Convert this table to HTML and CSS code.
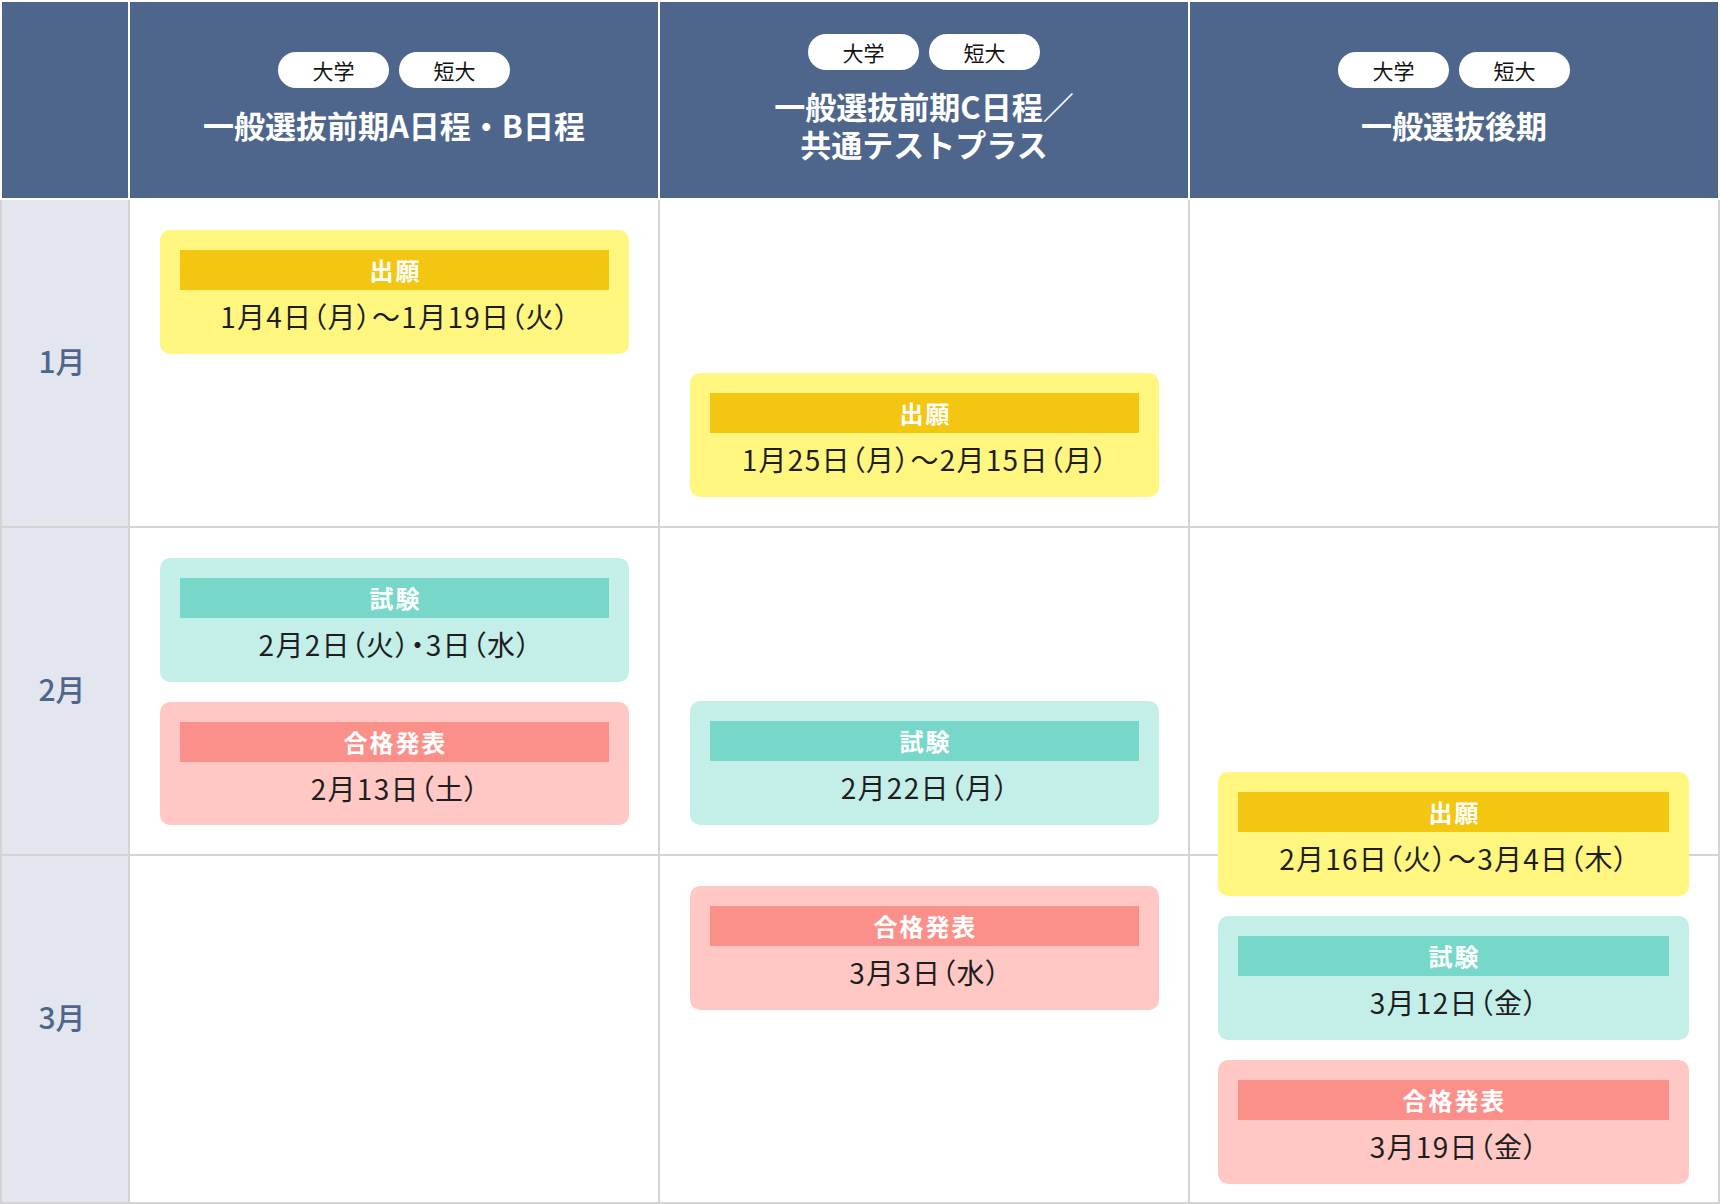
FILE: index.html
```html
<!DOCTYPE html>
<html lang="ja">
<head>
<meta charset="utf-8">
<title>入試日程</title>
<link rel="stylesheet" href="styles.css">
</head>
<body>
<div class="schedule">
  <div class="head head--corner"></div>
  <div class="head">
    <div class="tags"><span class="tag">大学</span><span class="tag">短大</span></div>
    <h2 class="head-title">一般選抜前期A日程・B日程</h2>
  </div>
  <div class="head">
    <div class="tags"><span class="tag">大学</span><span class="tag">短大</span></div>
    <h2 class="head-title"><span class="line">一般選抜前期C日程／</span><span class="line">共通テストプラス</span></h2>
  </div>
  <div class="head head--last">
    <div class="tags"><span class="tag">大学</span><span class="tag">短大</span></div>
    <h2 class="head-title">一般選抜後期</h2>
  </div>

  <div class="month">1月</div>
  <div class="cell cell--top">
    <div class="card card--apply"><div class="card-label">出願</div><div class="card-date">1月4日（月）〜1月19日（火）</div></div>
  </div>
  <div class="cell cell--bottom">
    <div class="card card--apply"><div class="card-label">出願</div><div class="card-date">1月25日（月）〜2月15日（月）</div></div>
  </div>
  <div class="cell cell--last"></div>

  <div class="month">2月</div>
  <div class="cell cell--top">
    <div class="card card--exam"><div class="card-label">試験</div><div class="card-date">2月2日（火）・3日（水）</div></div>
    <div class="card card--result"><div class="card-label">合格発表</div><div class="card-date">2月13日（土）</div></div>
  </div>
  <div class="cell cell--bottom">
    <div class="card card--exam"><div class="card-label">試験</div><div class="card-date">2月22日（月）</div></div>
  </div>
  <div class="cell cell--last cell--r2"></div>

  <div class="month month--last">3月</div>
  <div class="cell cell--top"></div>
  <div class="cell cell--top">
    <div class="card card--result"><div class="card-label">合格発表</div><div class="card-date">3月3日（水）</div></div>
  </div>
  <div class="cell cell--last cell--r3"></div>

  <div class="late">
    <div class="card card--apply"><div class="card-label">出願</div><div class="card-date">2月16日（火）〜3月4日（木）</div></div>
    <div class="card card--exam"><div class="card-label">試験</div><div class="card-date">3月12日（金）</div></div>
    <div class="card card--result"><div class="card-label">合格発表</div><div class="card-date">3月19日（金）</div></div>
  </div>
</div>
</body>
</html>
```

FILE: styles.css
```css
* { box-sizing: border-box; }
html, body { margin: 0; padding: 0; background: #fff; }
body {
  font-family: "Noto Sans CJK JP", "Noto Sans", sans-serif;
  color: #222;
}
.schedule {
  display: grid;
  grid-template-columns: 130px 530px 530px 530px;
  grid-template-rows: 198px 328px 328px 348px;
  width: 1720px;
  padding-top: 2px;
}
.head {
  background: #4e668c;
  border-right: 2px solid #fff;
  border-bottom: 2px solid #fff;
  display: flex;
  flex-direction: column;
  align-items: center;
  justify-content: center;
  gap: 17px;
  padding-bottom: 4px;
}
.head--corner { border-left: 2px solid #fff; }
.tags { display: flex; gap: 10px; }
.tag {
  width: 111px;
  height: 36px;
  border-radius: 18px;
  background: #fff;
  color: #111;
  font-size: 21px;
  line-height: 36px;
  text-align: center;
}
.head-title {
  margin: 0;
  color: #fff;
  font-size: 31px;
  font-weight: 700;
  line-height: 39px;
  text-align: center;
}
.head-title .line {
  display: block;
  height: 38px;
  line-height: 38px;
}
.month {
  background: #e3e6ee;
  border-left: 2px solid #d4d4d4;
  border-right: 2px solid #d4d4d4;
  border-bottom: 2px solid #d4d4d4;
  color: #4e668c;
  font-size: 30px;
  font-weight: 500;
  display: flex;
  align-items: center;
  justify-content: center;
  padding-right: 6px;
  padding-bottom: 6px;
}
.month--last { padding-bottom: 26px; }
.cell {
  border-right: 2px solid #d4d4d4;
  border-bottom: 2px solid #d4d4d4;
  display: flex;
  flex-direction: column;
  gap: 20px;
  padding: 30px 29px 29px 30px;
}
.cell--top { justify-content: flex-start; }
.cell--bottom { justify-content: flex-end; }
.cell--r2 { grid-column: 4; grid-row: 3; }
.cell--r3 { grid-column: 4; grid-row: 4; }
.late {
  grid-column: 4;
  grid-row: 3 / span 2;
  z-index: 1;
  display: flex;
  flex-direction: column;
  justify-content: flex-end;
  gap: 20px;
  padding: 0 31px 20px 28px;
}
.card {
  height: 124px;
  border-radius: 10px;
  padding: 20px 20px 0;
  text-align: center;
}
.card-label {
  height: 40px;
  line-height: 40px;
  color: #fff;
  font-size: 24px;
  font-weight: 700;
  letter-spacing: 0.08em;
  text-indent: 0.08em;
}
.card-date {
  height: 44px;
  line-height: 44px;
  padding-top: 4px;
  font-size: 28px;
  font-feature-settings: "palt";
  letter-spacing: 0.045em;
  text-indent: 0.045em;
  color: #1e1e1e;
}
.card--apply { background: #fff67f; }
.card--apply .card-label { background: #f2c611; }
.card--exam { background: #c4efe9; }
.card--exam .card-label { background: #77d8c9; }
.card--result { background: #ffc8c4; }
.card--result .card-label { background: #fb908a; }
```
